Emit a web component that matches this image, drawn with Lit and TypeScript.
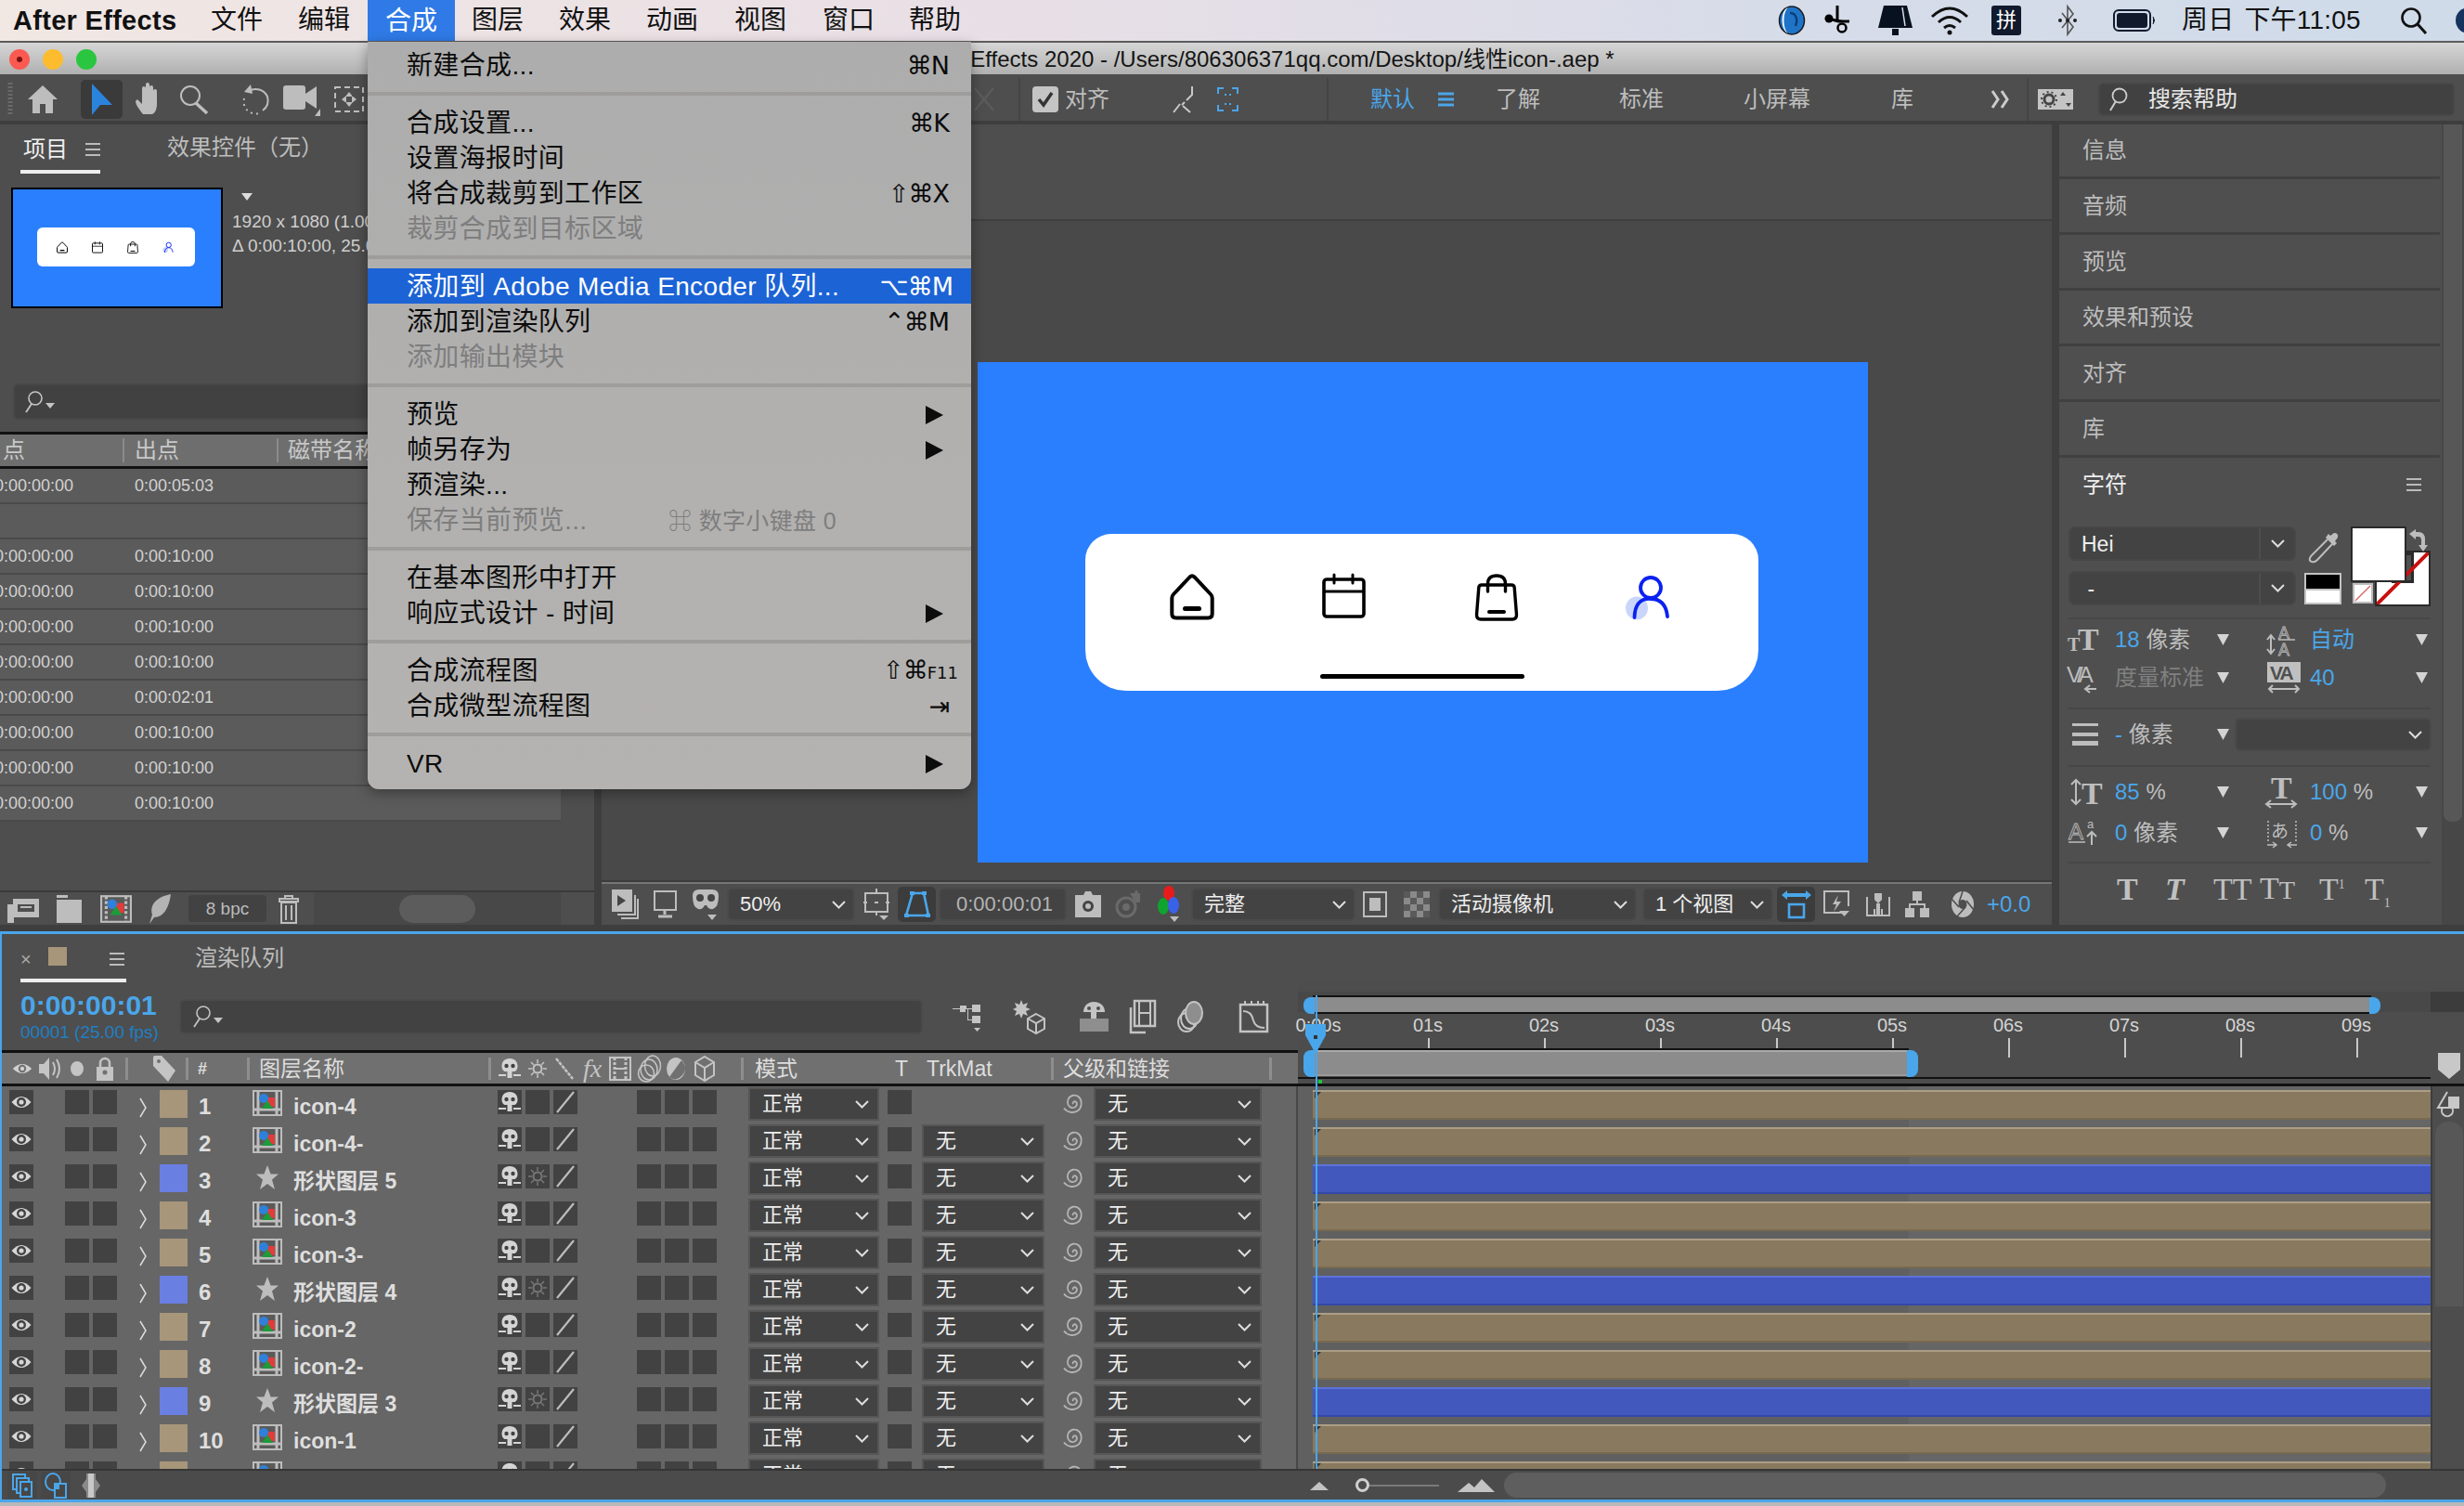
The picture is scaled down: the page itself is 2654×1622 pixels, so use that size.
import { LitElement, css, html, svg } from "lit";
import { customElement } from "lit/decorators.js";

type Slot = [number, number, unknown];

// lays out items along a row from their x positions, as flow with computed margins
const run = (items: Slot[], start = 0) => {
  let cur = start;
  return items.map(([x, w, c]) => {
    const m = x - cur;
    cur = x + w;
    return html`<div class="slot" style="margin-left:${m}px;width:${w}px">${c}</div>`;
  });
};

const BLUE = "#4aa6ea";

const chev = html`<svg width="15" height="9" viewBox="0 0 15 9"><path d="M1 1l6.5 6.5L14 1" fill="none" stroke="#ddd" stroke-width="2"/></svg>`;
const tri = html`<svg width="13" height="12" viewBox="0 0 13 12"><path d="M0 0h13L6.5 12z" fill="#d4d4d4"/></svg>`;
const burger = html`<svg width="16" height="14" viewBox="0 0 16 14"><path d="M0 1h16M0 7h16M0 13h16" stroke="#bbb" stroke-width="2"/></svg>`;
const lens = html`<svg width="34" height="26" viewBox="0 0 34 26"><circle cx="12" cy="9" r="7" fill="none" stroke="#c4c4c4" stroke-width="1.6"/><path d="M8 15L2 24" stroke="#c4c4c4" stroke-width="1.8"/><path d="M23 14h10l-5 6z" fill="#c4c4c4"/></svg>`;

const eye = html`<svg width="26" height="26" viewBox="0 0 26 26"><rect width="26" height="26" fill="#424242"/><path d="M2.5 13Q13 1 23.5 13Q13 25 2.5 13Z" fill="#d6d6d6"/><circle cx="13" cy="13" r="5" fill="#424242"/><circle cx="13" cy="13" r="2.6" fill="#d6d6d6"/></svg>`;
const dark = html`<div class="cell"></div>`;
const shyPath = html`<svg width="24" height="26" viewBox="0 0 24 26"><path d="M12 2C6 2 3.500 6 3.500 10.500c0 2.500 1 4.500 3 5.500h3v7h5v-7h3c2-1 3-3 3-5.500C20.500 6 18 2 12 2z" fill="#d4d4d4"/><circle cx="8.500" cy="10" r="2.200" fill="#424242"/><circle cx="15.500" cy="10" r="2.200" fill="#424242"/><path d="M0 20h8M16 20h8" stroke="#d4d4d4" stroke-width="2"/></svg>`;
const shy = html`<div class="cell">${shyPath}</div>`;
const sunSvg = (c: string) => html`<svg width="20" height="22" viewBox="0 0 20 22"><circle cx="10" cy="11" r="4.500" fill="none" stroke="${c}" stroke-width="2"/><path d="M10 1v4M10 17v4M0 11h4M16 11h4M3 4l3 3M14 15l3 3M3 18l3-3M14 7l3-3" stroke="${c}" stroke-width="1.500"/></svg>`;
const slash = html`<div class="cell"><svg width="26" height="26" viewBox="0 0 26 26"><path d="M4 24L22 2" stroke="#bdbdbd" stroke-width="2.200"/></svg></div>`;
const precomp = html`<svg width="32" height="28" viewBox="0 0 32 28"><rect x="1" y="1" width="30" height="26" fill="#5a5a5a" stroke="#bdbdbd" stroke-width="2"/><path d="M6 1v26M26 1v26M1 21h30" stroke="#bdbdbd" stroke-width="3"/><rect x="14" y="8" width="10" height="10" fill="#e23b3b"/><circle cx="12" cy="9" r="5" fill="#2f80db"/><path d="M16 11l6 9H10z" fill="#1d9b3a"/></svg>`;
const precompBig = html`<svg width="34" height="30" viewBox="0 0 32 28"><rect x="1" y="1" width="30" height="26" fill="#5a5a5a" stroke="#bdbdbd" stroke-width="2"/><path d="M6 1v26M26 1v26" stroke="#bdbdbd" stroke-width="3" stroke-dasharray="3 2"/><rect x="14" y="8" width="10" height="10" fill="#e23b3b"/><circle cx="12" cy="9" r="5" fill="#2f80db"/><path d="M16 11l6 9H10z" fill="#1d9b3a"/></svg>`;
const star = html`<svg width="26" height="28" viewBox="0 0 26 28"><path d="M13 1l3.600 9.500H25l-7 6 3 10.500-8-6-8 6 3-10.500-7-6h8.400z" fill="#bdbdbd"/></svg>`;
const spiral = html`<svg width="24" height="28" viewBox="0 0 24 28"><path d="M13 15c-1.500-2 2-4 3.500-1.500 1.500 3-1.500 6-5 5.500-4-.7-5.500-5-4-9 2-4.500 8-6 11.500-2.500 4 4 3.500 12-1.500 15-4 2.500-11 2-14.500-3" fill="none" stroke="#b4b4b4" stroke-width="1.800"/></svg>`;

const home = html`<svg width="48" height="50" viewBox="0 0 48 50"><path d="M21.500 3.500L4 22q-1.700 1.800-1.700 4v17q0 4.500 4.500 4.500h34.400q4.500 0 4.500-4.500V26q0-2.200-1.700-4L26.500 3.500q-2.500-2.500-5 0z" fill="none" stroke="#000" stroke-width="4"/><path d="M16.500 37.500h15" stroke="#000" stroke-width="5" stroke-linecap="round"/></svg>`;
const calendar = html`<svg width="47" height="48" viewBox="0 0 47 48"><rect x="2" y="6" width="43" height="40" rx="3" fill="none" stroke="#000" stroke-width="3.600"/><path d="M2 19h43" stroke="#000" stroke-width="3"/><path d="M13 1v9M33 1v9" stroke="#000" stroke-width="3" stroke-linecap="round"/></svg>`;
const bag = html`<svg width="46" height="51" viewBox="0 0 46 51"><path d="M7 12h32q3 0 3.200 3l2.300 29q0 5-4.500 5H6q-4.500 0-4.500-5L3.800 15Q4 12 7 12z" fill="none" stroke="#000" stroke-width="3.400"/><path d="M13.500 19v-8q0-9 9.500-9t9.500 9v8" fill="none" stroke="#000" stroke-width="3.400" stroke-linecap="round"/><path d="M15 41h16" stroke="#000" stroke-width="4" stroke-linecap="round"/></svg>`;
const person = html`<svg width="50" height="48" viewBox="-8 0 50 48"><ellipse cx="5" cy="35" rx="12" ry="12.500" fill="#c9d5fb"/><ellipse cx="20" cy="13" rx="11" ry="11" fill="none" stroke="#0a22f0" stroke-width="3.800"/><path d="M2.500 45Q3 24 20 25q16 0 18 19" fill="none" stroke="#0a22f0" stroke-width="3.800" stroke-linecap="round"/></svg>`;

const menuItems: any[] = [
  { t: "新建合成...", k: "⌘N" },
  { sep: true },
  { t: "合成设置...", k: "⌘K" },
  { t: "设置海报时间" },
  { t: "将合成裁剪到工作区", k: "⇧⌘X" },
  { t: "裁剪合成到目标区域", dis: true },
  { sep: true },
  { t: "添加到 Adobe Media Encoder 队列...", k: "⌥⌘M", on: true },
  { t: "添加到渲染队列", k: "⌃⌘M" },
  { t: "添加输出模块", dis: true },
  { sep: true },
  { t: "预览", sub: true },
  { t: "帧另存为", sub: true },
  { t: "预渲染..." },
  { t: "保存当前预览...", dis: true, mid: "⌘ 数字小键盘 0" },
  { sep: true },
  { t: "在基本图形中打开" },
  { t: "响应式设计 - 时间", sub: true },
  { sep: true },
  { t: "合成流程图", k: "⇧⌘", fk: "F11" },
  { t: "合成微型流程图", k: "⇥" },
  { sep: true },
  { t: "VR", sub: true },
];

const layers = [
  ["icon-4", "p"], ["icon-4-", "p"], ["形状图层 5", "s"], ["icon-3", "p"], ["icon-3-", "p"], ["形状图层 4", "s"],
  ["icon-2", "p"], ["icon-2-", "p"], ["形状图层 3", "s"], ["icon-1", "p"], ["icon-1-", "p"],
];

const projectRows = ["0:00:05:03", "", "0:00:10:00", "0:00:10:00", "0:00:10:00", "0:00:10:00", "0:00:02:01", "0:00:10:00", "0:00:10:00", "0:00:10:00"];

const marks = ["01s", "02s", "03s", "04s", "05s", "06s", "07s", "08s", "09s"];

@customElement("app-root")
export class AppRoot extends LitElement {
  static styles = css`
    :host {
      display: block;
      position: relative;
      width: 2654px;
      height: 1622px;
      overflow: hidden;
      background: #b8b8b8;
      font-family: "Liberation Sans", "Noto Sans CJK SC", sans-serif;
      font-size: 24px;
      line-height: 30px;
      color: #bdbdbd;
    }
    svg { display: block; flex: none; overflow: visible; }
    .row { display: flex; align-items: center; }
    .slot { flex: none; display: flex; align-items: center; white-space: nowrap; }

    .menubar { height: 44px; background: linear-gradient(90deg, #f1e7e3 0, #e8dfe6 42%, #d7dce9 72%, #cfdbe9 100%); color: #111; font-size: 28px; line-height: 46px; overflow: hidden; }
    .mb-on { width: 94px; height: 44px; text-align: center; background: #2f7ae6; color: #fff; }
    .ae { font-weight: bold; font-size: 29px; letter-spacing: .3px; }
    .clock { word-spacing: 3px; letter-spacing: .2px; }
    .pin { width: 32px; height: 32px; border-radius: 3px; background: #101a2c; color: #fff; font-size: 22px; line-height: 32px; text-align: center; }

    .titlebar { height: 36px; box-sizing: border-box; border-top: 2px solid #5c5c5c; background: linear-gradient(#d6d6d6, #b0b0b0); color: #141414; font-size: 24px; line-height: 36px; white-space: nowrap; }
    .title-text { margin-left: 988px; }
    .lights { position: absolute; left: 10px; top: 53px; display: flex; gap: 14px; }
    .light { width: 22px; height: 22px; border-radius: 50%; }
    .light.r { background: #fb5a52; display: flex; align-items: center; justify-content: center; }
    .light.r::after { content: ""; width: 6px; height: 6px; border-radius: 50%; background: #7a1410; }
    .light.y { background: #fcbc2e; }
    .light.g { background: #2ac63f; }

    .toolbar { height: 50px; box-sizing: border-box; padding-top: 3px; background: #4e4e4e; }
    .sel { width: 45px; height: 42px; background: #3a3a3a; border-radius: 5px; display: flex; align-items: center; justify-content: center; }
    .vline { width: 2px; height: 46px; background: #444; }
    .blue { color: #4aa6ea; }
    .check { width: 28px; height: 28px; border-radius: 4px; background: #c4c4c4; display: flex; align-items: center; justify-content: center; }
    .help { width: 384px; height: 36px; box-sizing: border-box; background: #414141; border: 2px solid #474747; border-radius: 6px; display: flex; align-items: center; padding-left: 8px; gap: 22px; color: #e8e8e8; }

    .main { display: flex; height: 873px; box-sizing: border-box; padding: 4px 0 7px; background: #3e3e3e; }
    .project { width: 640px; background: #4e4e4e; display: flex; flex-direction: column; margin-right: 8px; font-size: 18px; }
    .tabs { height: 53px; align-items: flex-end; flex: none; font-size: 24px; }
    .tab { display: flex; align-items: center; justify-content: space-between; height: 48px; width: 100%; box-sizing: border-box; padding: 0 0 0 3px; border-bottom: 4px solid #eee; color: #eee; }
    .tab-text { height: 48px; box-sizing: border-box; padding-bottom: 8px; display: flex; align-items: center; }
    .info { height: 218px; flex: none; padding-top: 15px; box-sizing: border-box; display: flex; }
    .thumb { margin-left: 12px; width: 228px; height: 130px; box-sizing: border-box; border: 2px solid #000; background: #2a7fff; padding: 41px 0 0 26px; }
    .thumb-card { width: 170px; height: 42px; background: #fff; border-radius: 6px; display: flex; align-items: center; padding-left: 21px; gap: 26px; box-sizing: border-box; }
    .thumb-card svg { width: 12px; height: 13px; }
    .meta { margin-left: 10px; line-height: 26px; white-space: nowrap; color: #cfcfcf; font-size: 19px; }
    .meta svg { margin: 6px 0 10px 10px; }
    .search { flex: none; margin: 8px 0 13px 14px; width: 610px; height: 39px; box-sizing: border-box; background: #414141; border: 2px solid #474747; border-radius: 6px; padding-left: 10px; display: flex; align-items: center; }
    .thead { flex: none; height: 40px; width: 604px; box-sizing: border-box; border-top: 3px solid #111; border-bottom: 3px solid #111; background: #6e6e6e; font-size: 24px; color: #c8c8c8; overflow: hidden; }
    .vbar { width: 2px; height: 26px; background: #8a8a8a; }
    .trow { flex: none; height: 38px; width: 604px; box-sizing: border-box; border-bottom: 2px solid #4a4a4a; background: #5b5b5b; color: #d2d2d2; font-size: 18px; overflow: hidden; }
    .pfoot { margin-top: auto; height: 35px; flex: none; border-top: 2px solid #3a3a3a; background: #4e4e4e; }
    .bpc { width: 84px; height: 29px; background: #424242; border-radius: 4px; text-align: center; color: #bbb; font-size: 19px; line-height: 29px; }
    .ptrack { width: 266px; height: 35px; background: #484848; display: flex; justify-content: center; align-items: center; }
    .oval { width: 82px; height: 30px; background: #5c5c5c; border-radius: 15px; }

    .viewer { width: 1562px; margin-right: 8px; display: flex; flex-direction: column; background: #4e4e4e; }
    .vtop { height: 102px; flex: none; border-bottom: 2px solid #3e3e3e; }
    .stage { flex: 1; background: #494949; padding: 152px 0 0 405px; border-bottom: 2px solid #3c3c3c; }
    .comp { width: 959px; height: 539px; background: #2a7fff; padding: 185px 0 0 116px; box-sizing: border-box; }
    .card { width: 725px; height: 169px; background: #fff; border-radius: 28px 28px 44px 44px; box-sizing: border-box; padding-top: 43px; }
    .card-icons { display: flex; align-items: flex-start; padding-left: 91px; height: 108px; }
    .home-s { width: 164px; }
    .cal-s { width: 165px; }
    .bag-s { width: 161px; }
    .person-s { margin-top: 2px; }
    .underline { width: 220px; height: 5px; background: #000; border-radius: 3px; margin-left: 253px; }
    .vbarline { height: 2px; background: #757575; flex: none; }
    .vfoot { height: 44px; flex: none; background: #4e4e4e; color: #eee; font-size: 22px; }
    .dd { height: 36px; width: 100%; box-sizing: border-box; background: #434343; border: 2px solid #4a4a4a; border-radius: 6px; display: flex; align-items: center; justify-content: space-between; padding: 0 8px 0 12px; }
    .dd.end { justify-content: flex-end; }
    .dd-box { height: 38px; background: #3c3c3c; border-radius: 5px; display: flex; align-items: center; justify-content: center; width: 100%; }
    .time { color: #b4b4b4; justify-content: center; }

    .right { flex: 1; display: flex; }
    .rpanel { width: 412px; background: #4f4f4f; }
    .rscroll { width: 24px; background: #474747; }
    .thumbv { width: 20px; height: 751px; margin-left: 2px; background: #575757; border-radius: 0 0 8px 8px; }
    .rrow { height: 57px; display: flex; align-items: center; padding-left: 25px; border-bottom: 3px solid #404040; margin-right: 2px; }
    .rrow:first-child { height: 56px; }
    .rhead { height: 58px; color: #eee; }
    .swatches { height: 86px; margin-top: 16px; align-items: flex-start; }
    .fonts { width: 245px; display: flex; flex-direction: column; gap: 11px; margin-left: 10px; }
    .fd { height: 37px; box-sizing: border-box; background: #434343; border: 2px solid #474747; border-radius: 7px; display: flex; align-items: center; color: #eee; font-size: 23px; padding-left: 12px; }
    .fd span { flex: 1; }
    .fd i { width: 36px; height: 100%; border-left: 2px solid #4d4d4d; display: flex; align-items: center; justify-content: center; }
    .dropper { margin: 6px 0 0 12px; }
    .bw { width: 40px; height: 34px; margin: 50px 0 0 -38px; border: 2px solid #c4c4c4; background: linear-gradient(#000 50%, #c4c4c4 50%, #c4c4c4 58%, #fff 58%); box-sizing: border-box; }
    .colors { position: relative; width: 86px; height: 86px; margin-left: 10px; }
    .fill { position: absolute; left: 0; top: 0; width: 60px; height: 60px; box-sizing: border-box; background: #fff; border: 2px solid #2a2a2a; }
    .stroke { position: absolute; left: 26px; top: 26px; width: 60px; height: 60px; box-sizing: border-box; border: 2px solid #2a2a2a; background: #fff; overflow: hidden; }
    .stroke::before { content: ""; position: absolute; left: 16px; top: 0; width: 24px; height: 33px; background: #4f4f4f; border: 3px solid #2a2a2a; box-sizing: border-box; }
    .stroke svg { position: absolute; left: -2px; top: -2px; }
    .none { position: absolute; left: 2px; top: 61px; }
    .swap { position: absolute; left: 62px; top: 2px; }
    .line-div { height: 2px; background: #474747; margin: 0 0 0 10px; width: 390px; }
    .line-div.first { margin-top: 12px; }
    .cv { color: #4aa6ea; font-size: 24px; }
    .cw { color: #bdbdbd; }
    .cd { color: #808080; }
    .h42 { height: 42px; } .h40 { height: 40px; } .h54 { height: 54px; } .h56 { height: 56px; }
    .h48 { height: 48px; box-sizing: border-box; padding-top: 6px; }
    .pt3 { box-sizing: border-box; padding-top: 3px; }
    .mt1 { margin-top: 1px; } .mb13 { margin-bottom: 12px; } .mb6 { margin-bottom: 6px; }
    .tfont { font-family: "Liberation Serif", serif; font-size: 34px; color: #c0c0c0; font-weight: bold; line-height: 40px; }
    .tfont.thin { font-weight: normal; }
    .tfont sup, .tfont sub { font-size: 14px; line-height: 0; }

    .timeline { height: 615px; box-sizing: border-box; border-top: 3px solid #4aa6ea; border-left: 2px solid #4aa6ea; border-bottom: 3px solid #4aa6ea; background: #4e4e4e; position: relative; display: flex; flex-direction: column; }
    .ttabs { height: 52px; flex: none; font-size: 24px; }
    .ttab { width: 114px; height: 46px; margin: 6px 0 0 20px; box-sizing: border-box; border-bottom: 4px solid #eee; display: flex; align-items: center; color: #aaa; }
    .ttab b { flex: none; width: 20px; height: 20px; background: #a8967a; margin: 0 46px 6px 20px; }
    .ttab u { flex: none; text-decoration: none; font-size: 20px; width: 10px; }
    .qname { margin-left: 74px; }
    .ttop { display: flex; height: 112px; flex: none; }
    .tleft { width: 1396px; flex: none; display: flex; flex-direction: column; }
    .tools { height: 73px; flex: none; }
    .tc { line-height: 32px; }
    .tc b { display: block; color: #4aa6ea; font-size: 30px; font-weight: bold; line-height: 34px; }
    .tc span { display: block; color: #1f7fc4; font-size: 19px; line-height: 24px; }
    .tsearch { width: 801px; height: 38px; box-sizing: border-box; background: #424242; border: 2px solid #4a4a4a; border-radius: 6px; padding-left: 12px; display: flex; align-items: center; }
    .lhead { height: 39px; flex: none; box-sizing: border-box; border-top: 3px solid #111; border-bottom: 3px solid #111; background: #707070; color: #ddd; font-size: 23px; }
    .lsep { width: 3px; height: 24px; background: #8e8e8e; }
    .hash { font-size: 18px; font-weight: bold; }
    .fx { font-family: "Liberation Serif", serif; font-size: 28px; color: #c4c4c4; }
    .scale { flex: 1; position: relative; background: #4d4d4d; }
    .nav { position: absolute; left: 16px; top: 14px; width: 1136px; height: 16px; border: 2px solid #111; background: #8c8c8c; }
    .navbg { position: absolute; left: 0; right: 0; top: 10px; height: 22px; background: #484848; }
    .navend { position: absolute; right: 0; top: 0; bottom: 0; width: 36px; background: #3c3c3c; }
    .hnd { position: absolute; width: 12px; background: #4aa6ea; }
    .hl { border-radius: 8px 0 0 8px; left: 6px; }
    .hr { border-radius: 0 8px 8px 0; }
    .h-nav { top: 16px; height: 18px; }
    .h-work { top: 73px; height: 29px; }
    .nav-r { left: 1154px; }
    .work-r { left: 656px; }
    .tick-label { position: absolute; top: 32px; width: 50px; margin-left: -25px; text-align: center; font-size: 20px; line-height: 28px; color: #d4d4d4; }
    .zero { left: 22px; }
    .tick { position: absolute; top: 60px; width: 2px; background: #c8c8c8; }
    .work { position: absolute; left: 18px; top: 71px; width: 640px; height: 30px; box-sizing: border-box; border-top: 2px solid #111; background: linear-gradient(#aaa 2px, #8c8c8c 2px, #8c8c8c 26px, #9a9a9a 26px); }
    .black { position: absolute; left: 0; right: 36px; top: 102px; height: 2px; background: #111; }
    .green { position: absolute; left: 22px; top: 105px; width: 4px; height: 5px; background: #21c43a; }
    .sbase { position: absolute; left: 0; right: 0; bottom: 0; height: 3px; background: #111; }
    .pin-side { position: absolute; right: 4px; top: 76px; }
    .head { position: absolute; left: 1404px; top: 97px; z-index: 2; }
    .pline { position: absolute; left: 1415px; top: 66px; bottom: 33px; width: 2px; background: #4aa6ea; z-index: 2; }

    .body { height: 412px; flex: none; overflow: hidden; display: flex; }
    .rows { width: 2616px; flex: none; }
    .lrow { height: 40px; display: flex; background: #666; color: #dedede; font-size: 23px; }
    .lcells { width: 1396px; flex: none; display: flex; align-items: flex-start; padding-top: 4px; box-sizing: border-box; border-right: 2px solid #484848; }
    .cell { width: 26px; height: 26px; background: #424242; display: flex; align-items: center; justify-content: center; }
    .sw { width: 30px; height: 30px; }
    .sw.p { background: #a8967a; }
    .sw.s { background: #6a7fe2; }
    .num { font-weight: bold; font-size: 24px; line-height: 36px; }
    .nm { font-weight: bold; line-height: 36px; }
    .staricon { margin-left: 3px; }
    .arrow-r { margin-top: 8px; }
    .ldd { width: 100%; height: 36px; margin-top: -3px; box-sizing: border-box; background: #434343; border: 2px solid #565656; display: flex; align-items: center; justify-content: space-between; padding: 0 9px 0 13px; color: #eee; font-size: 22px; font-weight: normal; }
    .track { flex: 1; position: relative; padding: 4px 0 0 16px; background: linear-gradient(90deg, #606060 0, #606060 658px, #666 658px); }
    .bar { height: 32px; box-sizing: border-box; }
    .bar.p { background: #897a5f; border-top: 2px solid #ab9e86; border-bottom: 2px solid #786a50; position: relative; }
    .bar.p::before { content: ""; position: absolute; left: 2px; top: 0; border-style: solid; border-width: 7px 7px 0 0; border-color: #333 transparent transparent transparent; }
    .bar.s { background: #4258bd; border-top: 2px solid #5c72d8; border-bottom: 2px solid #3448a8; }
    .side { flex: 1; background: #4d4d4d; border-left: 2px solid #3c3c3c; }
    .sthumb { width: 30px; height: 199px; margin: 6px 0 0 3px; background: #575757; border-radius: 14px 14px 0 0; }
    .lock { margin: 6px 0 0 5px; }
    .tfoot { height: 33px; flex: none; box-sizing: border-box; border-top: 2px solid #363636; background: #4b4b4b; }
    .tbox { width: 32px; height: 29px; background: #474747; display: flex; align-items: center; justify-content: center; }
    .sl { position: relative; width: 90px; height: 2px; background: #7a7a7a; }
    .sl::before { content: ""; position: absolute; left: 0; top: -7px; width: 15px; height: 15px; border: 3px solid #cfcfcf; border-radius: 50%; box-sizing: border-box; background: #4b4b4b; }
    .hscroll { width: 950px; height: 27px; background: #5e5e5e; border-radius: 14px; }

    .menu { position: absolute; left: 396px; top: 45px; width: 650px; height: 805px; box-sizing: border-box; padding-top: 6px; background: linear-gradient(#adadad, #b5b3b1); border-radius: 0 0 12px 12px; box-shadow: 0 4px 14px rgba(0,0,0,.35); color: #0c0c0c; font-size: 28px; letter-spacing: .35px; z-index: 5; }
    .mi { height: 38px; box-sizing: border-box; line-height: 38px; display: flex; align-items: center; padding: 2px 24px 0 42px; white-space: nowrap; position: relative; }
    .mi .k { margin-left: auto; font-family: "DejaVu Sans", "Liberation Sans", sans-serif; font-size: 27px; letter-spacing: -1px; }
    .mi .k small { font-size: 18px; letter-spacing: 0; margin-right: -10px; }
    .mi.dis { color: #7e7e7e; }
    .mi.on { background: #1c63d5; color: #fff; padding-right: 20px; }
    .mi .mid { position: absolute; left: 324px; font-size: 25px; }
    .mi .arr { margin-left: auto; margin-right: 6px; }
    .msep { height: 24px; display: flex; align-items: center; }
    .msep::after { content: ""; width: 100%; height: 4px; background: #9e9d9c; }
  `;

  renderMenuBar() {
    const items = ["文件", "编辑", "合成", "图层", "效果", "动画", "视图", "窗口", "帮助"];
    const xs = [227, 321, 396, 508, 602, 696, 791, 886, 979];
    return html`<div class="menubar row">
      ${run([
        [14, 190, html`<span class="ae">After Effects</span>`],
        ...items.map((t, i): Slot => (i === 2 ? [xs[i], 94, html`<div class="mb-on">${t}</div>`] : [xs[i], 60, t])),
        [1915, 30, html`<svg width="30" height="32" viewBox="0 0 30 32"><ellipse cx="15" cy="16" rx="13.500" ry="15" fill="#1f74c8" stroke="#1a1a1a" stroke-width="1.500"/><path d="M11 2C5 7 5 25 11 30 3 27 2 5 11 2z" fill="#fff"/><path d="M13 8c6 0 9 6 6 14" fill="none" stroke="#0b3f78" stroke-width="2.500"/></svg>`],
        [1965, 30, html`<svg width="30" height="32" viewBox="0 0 30 32"><path d="M14 0v16" stroke="#000" stroke-width="3"/><path d="M1 13l14 4 12 0" stroke="#000" stroke-width="3"/><circle cx="5" cy="14" r="4.500" fill="#000"/><circle cx="19" cy="24" r="4.500" fill="none" stroke="#000" stroke-width="2.500"/></svg>`],
        [2023, 37, html`<svg width="37" height="32" viewBox="0 0 37 32"><path d="M6 0h25l6 24H0z" fill="#08111f"/><path d="M26 2l3 20" stroke="#d9deea" stroke-width="1.500"/><rect x="15" y="25" width="7" height="7" fill="#08111f"/></svg>`],
        [2078, 44, html`<svg width="44" height="32" viewBox="0 0 44 32"><g fill="none" stroke="#111" stroke-width="3"><path d="M3 12Q22-6 41 12"/><path d="M10 18Q22 7 34 18"/><path d="M16 24q6-5 12 0"/></g><circle cx="22" cy="29" r="2.500" fill="#111"/></svg>`],
        [2145, 32, html`<div class="pin">拼</div>`],
        [2214, 26, html`<svg width="26" height="34" viewBox="0 0 26 34"><path d="M7 9l12 15-6 8V2l6 8L7 25" fill="none" stroke="#555" stroke-width="1.600"/><circle cx="5" cy="17" r="2" fill="#222"/><circle cx="13" cy="17" r="2" fill="#222"/><circle cx="21" cy="17" r="2" fill="#222"/></svg>`],
        [2276, 46, html`<svg width="46" height="24" viewBox="0 0 46 24"><rect x="1" y="1" width="39" height="22" rx="5" fill="none" stroke="#101a2c" stroke-width="2"/><rect x="4" y="4" width="33" height="16" rx="3" fill="#101a2c"/><path d="M43 8q3 4 0 8" fill="#101a2c" stroke="#101a2c"/></svg>`],
        [2350, 193, html`<span class="clock">周日 下午11:05</span>`],
        [2585, 30, html`<svg width="30" height="30" viewBox="0 0 30 30"><circle cx="12" cy="12" r="9.500" fill="none" stroke="#111" stroke-width="2.600"/><path d="M19 19l9 10" stroke="#111" stroke-width="3"/></svg>`],
        [2644, 30, html`<svg width="30" height="30" viewBox="0 0 30 30"><circle cx="15" cy="15" r="14" fill="#16335e"/></svg>`],
      ])}
    </div>`;
  }

  renderToolbar() {
    const c = "#bdbdbd";
    return html`<div class="toolbar row">
      ${run([
        [8, 6, html`<svg width="6" height="36" viewBox="0 0 6 36"><path d="M3 0v36" stroke="#6a6a6a" stroke-width="5" stroke-dasharray="2 2"/></svg>`],
        [30, 32, html`<svg width="32" height="30" viewBox="0 0 32 30"><path d="M16 0L0 15h5v15h8V20h6v10h8V15h5z" fill="${c}"/></svg>`],
        [87, 45, html`<div class="sel"><svg width="26" height="34" viewBox="0 0 26 34"><path d="M2 0l22 23H11L2 34z" fill="#2b84dc"/></svg></div>`],
        [145, 30, html`<svg width="30" height="34" viewBox="0 0 30 34"><path d="M9 33c-3-4-8-10-8-14l2-2 5 5V5a2 2 0 014 0V1a2 2 0 014 0v3a2 2 0 014 0v4a2 2 0 014 0v14c0 5-2 11-6 11z" fill="${c}"/></svg>`],
        [193, 33, html`<svg width="33" height="32" viewBox="0 0 33 32"><circle cx="12" cy="12" r="10" fill="none" stroke="${c}" stroke-width="2"/><path d="M18 20l12 11" stroke="${c}" stroke-width="3.500"/></svg>`],
        [260, 30, html`<svg width="30" height="34" viewBox="0 0 30 34"><path d="M8 8A14 14 0 0128 14c2 7-1 12-5 15" fill="none" stroke="${c}" stroke-width="2"/><path d="M10 1L3 9l9 2z" fill="${c}"/><path d="M3 16a13 13 0 0016 16" fill="none" stroke="${c}" stroke-width="2" stroke-dasharray="2 4"/></svg>`],
        [305, 40, html`<svg width="40" height="36" viewBox="0 0 40 36"><rect y="3" width="24" height="26" rx="3" fill="${c}"/><path d="M24 12l12-8v24l-12-8z" fill="${c}"/><path d="M40 28v8h-6z" fill="${c}"/></svg>`],
        [360, 32, html`<svg width="32" height="28" viewBox="0 0 32 28"><rect x="1" y="1" width="30" height="26" fill="none" stroke="${c}" stroke-width="2" stroke-dasharray="6 4"/><path d="M16 6l4 5h-8zM16 22l4-5h-8zM8 14l5-4v8zM24 14l-5-4v8z" fill="${c}"/></svg>`],
        [1048, 24, html`<svg width="24" height="28" viewBox="0 0 24 28"><path d="M2 2l20 24M22 2L2 26" stroke="#5c5c5c" stroke-width="2"/></svg>`],
        [1097, 2, html`<div class="vline"></div>`],
        [1112, 28, html`<div class="check"><svg width="18" height="18" viewBox="0 0 18 18"><path d="M2 9l5 6 9-13" fill="none" stroke="#333" stroke-width="3.500"/></svg></div>`],
        [1147, 50, "对齐"],
        [1262, 28, html`<svg width="28" height="28" viewBox="0 0 28 28"><path d="M22 0v9l-6 6M14 17l-3 3M9 19l-7 9M12 21l8 7" stroke="#c8c8c8" stroke-width="2" fill="none"/></svg>`],
        [1311, 23, html`<svg width="23" height="26" viewBox="0 0 23 26"><path d="M1 7V1h6M16 1h6v6M22 19v6h-6M7 25H1v-6M8 8h2M13 8h2M8 18h2M13 18h2" fill="none" stroke="${BLUE}" stroke-width="2"/></svg>`],
        [1429, 2, html`<div class="vline"></div>`],
        [1476, 50, html`<span class="blue">默认</span>`],
        [1549, 17, html`<svg width="17" height="16" viewBox="0 0 17 16"><path d="M0 2h17M0 8h17M0 14h17" stroke="${BLUE}" stroke-width="3"/></svg>`],
        [1611, 50, "了解"],
        [1744, 50, "标准"],
        [1878, 74, "小屏幕"],
        [2037, 25, "库"],
        [2144, 22, html`<svg width="22" height="20" viewBox="0 0 22 20"><path d="M2 1l6 9-6 9M12 1l6 9-6 9" fill="none" stroke="#ccc" stroke-width="3"/></svg>`],
        [2183, 2, html`<div class="vline"></div>`],
        [2195, 38, html`<svg width="38" height="22" viewBox="0 0 38 22"><rect width="38" height="22" fill="#c4c4c4"/><circle cx="12" cy="11" r="5" fill="none" stroke="#444" stroke-width="3"/><circle cx="12" cy="11" r="8" fill="none" stroke="#444" stroke-width="2" stroke-dasharray="2 3"/><path d="M24 7h6l-3-4zM30 15h6l-3 4z" fill="#444"/></svg>`],
        [2260, 384, html`<div class="help"><svg width="22" height="26" viewBox="0 0 22 26"><circle cx="13" cy="9" r="7.500" fill="none" stroke="#ccc" stroke-width="1.800"/><path d="M9 15L3 25" stroke="#ccc" stroke-width="2"/></svg><span>搜索帮助</span></div>`],
      ])}
    </div>`;
  }

  renderProject() {
    return html`<div class="project">
      <div class="row tabs">
        ${run([
          [22, 86, html`<div class="tab"><span>项目</span>${burger}</div>`],
          [180, 200, html`<div class="tab-text">效果控件（无）</div>`],
        ])}
      </div>
      <div class="info">
        <div class="thumb">
          <div class="thumb-card">${home}${calendar}${bag}${person}</div>
        </div>
        <div class="meta">
          <svg width="12" height="8" viewBox="0 0 12 8"><path d="M0 0h12L6 8z" fill="#ddd"/></svg>
          <div>1920 x 1080 (1.00)</div>
          <div>Δ 0:00:10:00, 25.00 fps</div>
        </div>
      </div>
      <div class="search">${lens}</div>
      <div class="thead row">
        ${run([
          [3, 24, "点"],
          [132, 2, html`<div class="vbar"></div>`],
          [145, 50, "出点"],
          [298, 2, html`<div class="vbar"></div>`],
          [310, 100, "磁带名称"],
        ])}
      </div>
      ${projectRows.map(
        (r) => html`<div class="trow row">
          ${r ? run([[-6, 90, "0:00:00:00"], [145, 100, r]]) : ""}
        </div>`
      )}
      <div class="pfoot row">
        ${run([
          [8, 34, html`<svg width="34" height="30" viewBox="0 0 34 30"><path d="M0 10h7v20H0zM6 4h28v20H6z" fill="#bdbdbd"/><path d="M11 10h18v8H11z" fill="#4e4e4e"/><path d="M14 13h12" stroke="#bdbdbd" stroke-width="2"/></svg>`],
          [61, 27, html`<svg width="27" height="30" viewBox="0 0 27 30"><path d="M0 0h12v3H0zM0 5h27v25H0z" fill="#bdbdbd"/></svg>`],
          [108, 34, precompBig],
          [160, 26, html`<svg width="26" height="32" viewBox="0 0 26 32"><path d="M24 0C8 3 1 12 4 22l-3 10 5-7c10 0 16-10 18-25z" fill="#b4b4b4"/></svg>`],
          [203, 84, html`<div class="bpc">8 bpc</div>`],
          [300, 22, html`<svg width="22" height="30" viewBox="0 0 22 30"><path d="M7 1h8v3H7zM1 4h20v3H1zM3 8h16v22H3z" fill="none" stroke="#bdbdbd" stroke-width="2"/><path d="M8 11v16M14 11v16" stroke="#bdbdbd" stroke-width="2"/></svg>`],
          [338, 266, html`<div class="ptrack"><div class="oval"></div></div>`],
        ])}
      </div>
    </div>`;
  }

  renderViewer() {
    const c = "#bdbdbd";
    const dd = (t: string) => html`<div class="dd"><span>${t}</span>${chev}</div>`;
    return html`<div class="viewer">
      <div class="vtop"></div>
      <div class="stage">
        <div class="comp">
          <div class="card">
            <div class="card-icons">
              <div class="home-s">${home}</div>
              <div class="cal-s">${calendar}</div>
              <div class="bag-s">${bag}</div>
              <div class="person-s">${person}</div>
            </div>
            <div class="underline"></div>
          </div>
        </div>
      </div>
      <div class="vbarline"></div>
      <div class="vfoot row">
        ${run(
          [
            [659, 28, html`<svg width="28" height="32" viewBox="0 0 28 32"><rect y="0" width="22" height="24" fill="${c}"/><path d="M6 6l9 6-9 6z" fill="#444"/><path d="M25 6v21H6M28 10v21H10" fill="none" stroke="${c}" stroke-width="2"/></svg>`],
            [704, 25, html`<svg width="25" height="30" viewBox="0 0 25 30"><rect x="1" y="1" width="23" height="20" fill="none" stroke="${c}" stroke-width="2"/><path d="M12 21v5M5 28h15" stroke="${c}" stroke-width="3"/></svg>`],
            [745, 30, html`<svg width="30" height="34" viewBox="0 0 30 34"><path d="M1 8q0-7 7-7h14q7 0 7 7 0 12-6 14-5 1-7-4h-2q-2 5-7 4-6-2-6-14z" fill="${c}"/><circle cx="9" cy="10" r="4" fill="#444"/><circle cx="21" cy="10" r="4" fill="#444"/><path d="M17 28h10l-5 6z" fill="${c}"/></svg>`],
            [783, 138, dd("50%")],
            [930, 28, html`<svg width="28" height="34" viewBox="0 0 28 34"><rect x="2" y="5" width="24" height="20" fill="none" stroke="${c}" stroke-width="2"/><path d="M14 0v5M14 25v4M0 15h4M24 15h4M12 15h4" stroke="${c}" stroke-width="2"/><path d="M17 29h10l-5 5z" fill="${c}"/></svg>`],
            [967, 41, html`<div class="dd-box"><svg width="28" height="30" viewBox="0 0 28 30"><path d="M9 3h12l5 24H2z" fill="none" stroke="${BLUE}" stroke-width="2.600"/><path d="M6 1h5v4H6zM19 1h5v4h-5zM0 25h5v4H0zM23 25h5v4h-5z" fill="${BLUE}"/></svg></div>`],
            [1011, 138, html`<div class="dd time">0:00:00:01</div>`],
            [1158, 28, html`<svg width="28" height="28" viewBox="0 0 28 28"><path d="M0 4h9l2-4h6l2 4h9v24H0z" fill="${c}"/><circle cx="14" cy="16" r="6" fill="#444"/><circle cx="14" cy="16" r="3" fill="${c}"/></svg>`],
            [1201, 27, html`<svg width="27" height="30" viewBox="0 0 27 30"><circle cx="12" cy="18" r="10" fill="none" stroke="#6a6a6a" stroke-width="3"/><circle cx="12" cy="18" r="4" fill="#6a6a6a"/><path d="M16 3h5l1-3h2l1 3h2v10h-5" fill="#6a6a6a"/></svg>`],
            [1247, 23, html`<svg width="23" height="40" viewBox="0 0 23 40"><ellipse cx="12" cy="8" rx="6" ry="8" fill="#e81b1b"/><ellipse cx="6" cy="22" rx="6" ry="9" fill="#0fa32f"/><ellipse cx="17" cy="21" rx="6" ry="9" fill="#3a62e8"/><path d="M13 33h10l-5 6z" fill="${c}"/></svg>`],
            [1283, 177, dd("完整")],
            [1468, 26, html`<svg width="26" height="28" viewBox="0 0 26 28"><rect x="1" y="1" width="24" height="26" fill="none" stroke="${c}" stroke-width="2"/><rect x="7" y="7" width="12" height="14" fill="${c}"/></svg>`],
            [1512, 28, html`<svg width="28" height="28" viewBox="0 0 28 28"><rect width="28" height="28" fill="#8a8a8a"/><path d="M0 0h7v7H0zM14 0h7v7h-7zM7 7h7v7H7zM21 7h7v7h-7zM0 14h7v7H0zM14 14h7v7h-7zM7 21h7v7H7zM21 21h7v7h-7z" fill="#5a5a5a"/></svg>`],
            [1549, 214, dd("活动摄像机")],
            [1769, 141, dd("1 个视图")],
            [1914, 41, html`<div class="dd-box"><svg width="32" height="30" viewBox="0 0 32 30"><path d="M0 5l6-5v3h20V0l6 5-6 5V7H6v3z" fill="${BLUE}"/><rect x="8" y="15" width="16" height="14" fill="none" stroke="${BLUE}" stroke-width="2.600"/></svg></div>`],
            [1964, 28, html`<svg width="28" height="30" viewBox="0 0 28 30"><path d="M20 24H1V1h26v16" fill="none" stroke="${c}" stroke-width="2"/><path d="M16 5l-6 10h4l-3 8 8-11h-5z" fill="${c}"/><path d="M17 22h11l-5.500 6z" fill="${c}"/></svg>`],
            [2010, 26, html`<svg width="26" height="26" viewBox="0 0 26 26"><path d="M1 5v20h24V5M9 18v7M17 18v7" fill="none" stroke="${c}" stroke-width="2"/><path d="M9 1h8v7l-4 4-4-4zM11 12h4v13h-4z" fill="${c}"/></svg>`],
            [2052, 26, html`<svg width="26" height="28" viewBox="0 0 26 28"><path d="M8 0h10v10H8zM0 18h10v10H0zM16 18h10v10H16z" fill="${c}"/><path d="M13 10v4M5 18v-4h16v4" fill="none" stroke="${c}" stroke-width="2"/></svg>`],
            [2102, 24, html`<svg width="24" height="28" viewBox="0 0 24 28"><ellipse cx="12" cy="14" rx="12" ry="14" fill="${c}"/><path d="M8 12l4-12M16 10L24 20M15 17L6 27M8 17L0 8" stroke="#4e4e4e" stroke-width="1.600"/><ellipse cx="12" cy="14" rx="4.500" ry="5" fill="#4e4e4e"/></svg>`],
            [2140, 50, html`<span class="cv">+0.0</span>`],
          ],
          648
        )}
      </div>
    </div>`;
  }

  renderRight() {
    const names = ["信息", "音频", "预览", "效果和预设", "对齐", "库"];
    const arrow = tri;
    const I = (body: unknown, w = 38, h = 34) => html`<svg width="${w}" height="${h}" viewBox="0 0 ${w} ${h}" fill="#bdbdbd">${body}</svg>`;
    const s = 2218;
    return html`<div class="right">
      <div class="rpanel">
        ${names.map((n) => html`<div class="rrow">${n}</div>`)}
        <div class="row rhead">${run([[2243, 50, "字符"], [2592, 16, burger]], s)}</div>
        <div class="row swatches">
          <div class="fonts">
            <div class="fd"><span>Hei</span><i>${chev}</i></div>
            <div class="fd"><span>&nbsp;-</span><i>${chev}</i></div>
          </div>
          <div class="dropper"><svg width="35" height="34" viewBox="0 0 35 34"><path d="M22 8L4 26q-3 5 1 6 3 1 6-2l17-18" fill="none" stroke="#bdbdbd" stroke-width="2"/><path d="M20 6l9 9 3-3-2-2 3-4q1-5-4-5l-4 3-2-2z" fill="#bdbdbd"/></svg></div>
          <div class="bw"></div>
          <div class="colors">
            <div class="stroke"><svg width="60" height="60" viewBox="0 0 60 60"><path d="M0 60L60 0" stroke="#c8100f" stroke-width="4"/></svg></div>
            <div class="fill"></div>
            <div class="none"><svg width="22" height="22" viewBox="0 0 22 22"><rect x="1" y="1" width="20" height="20" fill="#fff" stroke="#bdbdbd" stroke-width="2"/><path d="M3 19L19 3" stroke="#d66" stroke-width="1.500"/></svg></div>
            <div class="swap"><svg width="22" height="26" viewBox="0 0 22 26"><path d="M1 6l7-5v3h3q7 0 7 8v6h3l-5 7-5-7h3v-5q0-4-3-4H8v3z" fill="#bdbdbd"/></svg></div>
          </div>
        </div>
        <div class="line-div first"></div>
        <div class="row h42 mt1">
          ${run(
            [
              [2228, 36, I(svg`<text x="10" y="28" font-family="Liberation Serif" font-weight="bold" font-size="34">T</text><text x="-1" y="29" font-family="Liberation Serif" font-weight="bold" font-size="20">T</text>`)],
              [2278, 110, html`<span class="cv">18 <span class="cw">像素</span></span>`],
              [2388, 13, arrow],
              [2440, 34, I(svg`<text x="14" y="16" font-size="18" fill="none" stroke="#bdbdbd" stroke-width=".8">A</text><text x="14" y="34" font-size="18" fill="none" stroke="#bdbdbd" stroke-width=".8">A</text><path d="M14 17h18" stroke="#bdbdbd" stroke-width="1.500"/><path d="M6 12v20M2 17l4-5 4 5M2 27l4 5 4-5" fill="none" stroke="#bdbdbd" stroke-width="2"/>`)],
              [2488, 110, html`<span class="cv">自动</span>`],
              [2602, 13, arrow],
            ],
            s
          )}
        </div>
        <div class="row h40 mb13">
          ${run(
            [
              [2226, 38, I(svg`<text x="0" y="22" font-size="24" letter-spacing="-5">V/A</text><path d="M20 29h12M25 25l-5 4 5 4" fill="none" stroke="#bdbdbd" stroke-width="2"/>`)],
              [2278, 110, html`<span class="cd">度量标准</span>`],
              [2388, 13, arrow],
              [2442, 36, I(svg`<rect width="36" height="22" fill="#c0c0c0"/><text x="3" y="19" font-size="21" font-weight="bold" fill="#4f4f4f" letter-spacing="-2">VA</text><path d="M2 29h32M6 25l-4 4 4 4M30 25l4 4-4 4" fill="none" stroke="#bdbdbd" stroke-width="2"/>`)],
              [2488, 110, html`<span class="cv">40</span>`],
              [2602, 13, arrow],
            ],
            s
          )}
        </div>
        <div class="line-div"></div>
        <div class="row h54 mb6">
          ${run(
            [
              [2232, 28, I(svg`<path d="M0 1h28v3H0zM0 11h28v4H0zM0 20h28v5H0z"/>`, 28, 26)],
              [2278, 110, html`<span class="cv">- <span class="cw">像素</span></span>`],
              [2388, 13, arrow],
              [2407, 212, html`<div class="dd end">${chev}</div>`],
            ],
            s
          )}
        </div>
        <div class="line-div"></div>
        <div class="row h48">
          ${run(
            [
              [2230, 36, I(svg`<text x="12" y="30" font-family="Liberation Serif" font-weight="bold" font-size="34">T</text><path d="M6 4v26M1 9l5-5 5 5M1 25l5 5 5-5" fill="none" stroke="#bdbdbd" stroke-width="2"/>`)],
              [2278, 110, html`<span class="cv">85 <span class="cw">%</span></span>`],
              [2388, 13, arrow],
              [2440, 34, I(svg`<text x="6" y="24" font-family="Liberation Serif" font-weight="bold" font-size="34">T</text><path d="M1 30h32M6 26l-5 4 5 4M28 26l5 4-5 4" fill="none" stroke="#bdbdbd" stroke-width="2"/>`)],
              [2488, 110, html`<span class="cv">100 <span class="cw">%</span></span>`],
              [2602, 13, arrow],
            ],
            s
          )}
        </div>
        <div class="row h42 pt3 mb13">
          ${run(
            [
              [2228, 32, I(svg`<text x="0" y="24" font-size="24" fill="none" stroke="#bdbdbd" stroke-width=".8">A</text><text x="20" y="12" font-size="13">a</text><path d="M0 27h18" stroke="#bdbdbd" stroke-width="1.500"/><path d="M25 16v14M20 21l5-5 5 5" fill="none" stroke="#bdbdbd" stroke-width="2"/>`, 32)],
              [2278, 110, html`<span class="cv">0 <span class="cw">像素</span></span>`],
              [2388, 13, arrow],
              [2442, 32, I(svg`<text x="4" y="22" font-size="19" font-family="Noto Sans CJK JP">あ</text><path d="M1 4v22M31 4v22" stroke="#bdbdbd" stroke-width="1.500" stroke-dasharray="2 2"/><path d="M0 30h10M6 27l4 3-4 3M32 30H22M26 27l-4 3 4 3" fill="none" stroke="#bdbdbd" stroke-width="1.500"/>`, 32)],
              [2488, 110, html`<span class="cv">0 <span class="cw">%</span></span>`],
              [2602, 13, arrow],
            ],
            s
          )}
        </div>
        <div class="line-div"></div>
        <div class="row h56">
          ${run(
            [
              [2280, 30, html`<span class="tfont">T</span>`],
              [2332, 26, html`<span class="tfont"><i>T</i></span>`],
              [2384, 40, html`<span class="tfont thin">TT</span>`],
              [2434, 40, html`<span class="tfont thin">T<small>T</small></span>`],
              [2498, 30, html`<span class="tfont thin">T<sup>1</sup></span>`],
              [2547, 30, html`<span class="tfont thin">T<sub>1</sub></span>`],
            ],
            s
          )}
        </div>
      </div>
      <div class="rscroll"><div class="thumbv"></div></div>
    </div>`;
  }

  renderTimeline() {
    const c = "#c4c4c4";
    const sep = html`<div class="lsep"></div>`;
    const O = 2;
    return html`<div class="timeline">
      <div class="ttabs row">
        <div class="ttab"><u>×</u><b></b>${burger}</div>
        <div class="qname">渲染队列</div>
      </div>
      <div class="ttop">
        <div class="tleft">
          <div class="tools row">
            ${run(
              [
                [22, 150, html`<div class="tc"><b>0:00:00:01</b><span>00001 (25.00 fps)</span></div>`],
                [193, 801, html`<div class="tsearch">${lens}</div>`],
                [1026, 30, html`<svg width="30" height="32" viewBox="0 0 30 32"><path d="M0 7h8V4h7v3h6V3h9v8h-9V8h-4v11h4v-4h9v8h-9v-3h-5V8h-2v3H8V8H0z" fill="${c}"/><path d="M23 28h7l-3.500 4z" fill="${c}"/></svg>`],
                [1092, 34, html`<svg width="34" height="36" viewBox="0 0 34 36"><path d="M24 15l9 5v11l-9 5-9-5V20z" fill="none" stroke="${c}" stroke-width="2"/><path d="M15 20l9 5 9-5M24 25v11" fill="none" stroke="${c}" stroke-width="2"/><path d="M8 0l2 5 5-2-2 5 5 2-5 2 2 5-5-2-2 5-2-5-5 2 2-5-4-2 4-2-2-5 5 2z" fill="${c}"/></svg>`],
                [1163, 31, html`<svg width="31" height="32" viewBox="0 0 31 32"><path d="M15 0C8 0 4 5 4 11h23C27 5 23 0 15 0z" fill="${c}"/><circle cx="10" cy="7" r="2" fill="#4e4e4e"/><circle cx="20" cy="7" r="2" fill="#4e4e4e"/><rect x="12" y="11" width="6" height="8" fill="${c}"/><rect y="18" width="31" height="14" fill="#8e8e8e"/></svg>`],
                [1216, 29, html`<svg width="29" height="36" viewBox="0 0 29 36"><rect x="6" y="1" width="22" height="27" fill="none" stroke="${c}" stroke-width="2.500"/><path d="M11 1v27M23 1v27M11 14h12" stroke="${c}" stroke-width="2"/><path d="M2 8v27h16" fill="none" stroke="${c}" stroke-width="2.500"/></svg>`],
                [1268, 28, html`<svg width="28" height="34" viewBox="0 0 28 34"><g fill="none" stroke="${c}" stroke-width="2"><ellipse cx="10" cy="23" rx="9" ry="10"/><ellipse cx="13" cy="19" rx="9" ry="11"/></g><ellipse cx="18" cy="13" rx="9" ry="12" fill="#8e8e8e" stroke="${c}" stroke-width="2"/></svg>`],
                [1335, 31, html`<svg width="31" height="34" viewBox="0 0 31 34"><rect x="1" y="4" width="29" height="29" fill="none" stroke="${c}" stroke-width="2.500"/><path d="M6 0v4M13 0v4M20 0v4M26 0v4" stroke="${c}" stroke-width="2"/><path d="M4 11q9 0 11 10 2 8 12 8" fill="none" stroke="${c}" stroke-width="2"/></svg>`],
              ],
              O
            )}
          </div>
          <div class="lhead row">
            ${run(
              [
                [13, 21, html`<svg width="22" height="22" viewBox="0 0 26 26"><path d="M1 13Q13 1 25 13Q13 25 1 13Z" fill="#d0d0d0"/><circle cx="13" cy="13" r="5" fill="#707070"/><circle cx="13" cy="13" r="2.600" fill="#d0d0d0"/></svg>`],
                [42, 23, html`<svg width="23" height="26" viewBox="0 0 23 26"><path d="M0 8h5l6-7v24l-6-7H0z" fill="${c}"/><path d="M15 6q4 7 0 14M19 3q6 10 0 20" fill="none" stroke="${c}" stroke-width="2"/></svg>`],
                [76, 14, html`<svg width="14" height="16" viewBox="0 0 14 16"><ellipse cx="7" cy="8" rx="7" ry="8" fill="${c}"/></svg>`],
                [104, 18, html`<svg width="18" height="26" viewBox="0 0 18 26"><path d="M4 11V7a5 5 0 0110 0v4" fill="none" stroke="${c}" stroke-width="2.500"/><rect y="11" width="18" height="15" fill="${c}"/><circle cx="9" cy="17" r="2.500" fill="#707070"/></svg>`],
                [135, 3, sep],
                [165, 24, html`<svg width="24" height="28" viewBox="0 0 24 28"><path d="M0 2q0-2 2-2h7l15 16-8 12L0 11z" fill="${c}"/><circle cx="6" cy="6" r="2" fill="#707070"/></svg>`],
                [200, 3, sep],
                [213, 12, html`<span class="hash">#</span>`],
                [266, 3, sep],
                [279, 100, "图层名称"],
                [526, 3, sep],
                [537, 24, shyPath],
                [569, 20, sunSvg(c)],
                [598, 20, html`<svg width="20" height="26" viewBox="0 0 20 26"><path d="M1 2l18 22" stroke="${c}" stroke-width="2.500" stroke-dasharray="4 1"/></svg>`],
                [628, 22, html`<i class="fx">fx</i>`],
                [656, 24, html`<svg width="24" height="26" viewBox="0 0 24 26"><rect x="1" y="1" width="22" height="24" fill="none" stroke="${c}" stroke-width="2"/><path d="M6 1v24M18 1v24" stroke="${c}" stroke-width="3" stroke-dasharray="3 2"/><path d="M6 13h12" stroke="${c}" stroke-width="2"/></svg>`],
                [687, 25, html`<svg width="25" height="30" viewBox="0 0 25 30"><g fill="none" stroke="${c}" stroke-width="1.500"><ellipse cx="9" cy="20" rx="8.500" ry="9"/><ellipse cx="12" cy="16" rx="9" ry="11"/><ellipse cx="16" cy="12" rx="8.500" ry="11"/></g></svg>`],
                [718, 20, html`<svg width="20" height="24" viewBox="0 0 20 24"><ellipse cx="10" cy="12" rx="10" ry="12" fill="${c}"/><path d="M16 3L3 21a10 12 0 0013-1q8-8 0-17z" fill="#707070"/></svg>`],
                [747, 24, html`<svg width="24" height="28" viewBox="0 0 24 28"><path d="M12 1l10 6v14l-10 6-10-6V7zM2 7l10 6 10-6M12 13v14" fill="none" stroke="${c}" stroke-width="2"/></svg>`],
                [798, 3, sep],
                [813, 50, "模式"],
                [964, 14, "T"],
                [998, 70, "TrkMat"],
                [1132, 3, sep],
                [1145, 120, "父级和链接"],
                [1367, 3, sep],
              ],
              O
            )}
          </div>
        </div>
        <div class="scale">
          <div class="navbg"><div class="navend"></div></div>
          <div class="nav"></div>
          <div class="hnd hl h-nav"></div>
          <div class="hnd hr h-nav nav-r"></div>
          <div class="tick-label zero">0:00s</div>
          ${marks.map((m, i) => {
            const x = 140 + i * 125;
            return html`<div class="tick-label" style="left:${x}px">${m}</div><div class="tick" style="left:${x}px;height:${i < 5 ? 12 : 21}px"></div>`;
          })}
          <div class="work"></div>
          <div class="hnd hl h-work"></div>
          <div class="hnd hr h-work work-r"></div>
          <div class="black"></div>
          <div class="green"></div>
          <div class="sbase"></div>
          <div class="pin-side"><svg width="24" height="28" viewBox="0 0 24 28"><path d="M0 0h24v18l-12 10L0 18z" fill="#c8c8c8"/></svg></div>
        </div>
      </div>
      <div class="body">
        <div class="rows">
          ${layers.map(([name, kind], i) => {
            const sun = kind === "s" ? html`<div class="cell">${sunSvg("#777")}</div>` : dark;
            return html`<div class="lrow">
              <div class="lcells">
                ${run(
                  [
                    [10, 26, eye],
                    [70, 26, dark],
                    [100, 26, dark],
                    [150, 8, html`<svg class="arrow-r" width="8" height="22" viewBox="0 0 8 22"><path d="M1 1l6 10-6 10" fill="none" stroke="#ddd" stroke-width="1.500"/></svg>`],
                    [172, 30, html`<div class="sw ${kind}"></div>`],
                    [214, 50, html`<span class="num">${i + 1}</span>`],
                    [272, 32, kind === "s" ? html`<div class="staricon">${star}</div>` : precomp],
                    [316, 200, html`<span class="nm">${name}</span>`],
                    [536, 26, shy],
                    [566, 26, sun],
                    [596, 26, slash],
                    [686, 26, dark],
                    [716, 26, dark],
                    [746, 26, dark],
                    [806, 141, html`<div class="ldd"><span>正常</span>${chev}</div>`],
                    [956, 26, dark],
                    [993, 132, i === 0 ? "" : html`<div class="ldd"><span>无</span>${chev}</div>`],
                    [1143, 24, spiral],
                    [1178, 181, html`<div class="ldd"><span>无</span>${chev}</div>`],
                  ],
                  O
                )}
              </div>
              <div class="track"><div class="bar ${kind}"></div></div>
            </div>`;
          })}
        </div>
        <div class="side">
          <div class="lock"><svg width="24" height="26" viewBox="0 0 24 26"><path d="M11 0L1 17h16M6 17a6 6 0 1010 0" fill="none" stroke="#c8c8c8" stroke-width="2"/><rect x="12" y="5" width="12" height="13" fill="#c8c8c8"/></svg></div>
          <div class="sthumb"></div>
        </div>
      </div>
      <div class="tfoot row">
        ${run(
          [
            [8, 32, html`<div class="tbox"><svg width="22" height="26" viewBox="0 0 22 26"><g fill="#474747" stroke="${BLUE}" stroke-width="2"><rect x="1" y="1" width="13" height="16"/><rect x="5" y="5" width="13" height="16"/><rect x="9" y="9" width="12" height="16"/></g><circle cx="15" cy="17" r="2" fill="${BLUE}"/></svg></div>`],
            [44, 32, html`<div class="tbox"><svg width="24" height="28" viewBox="0 0 24 28"><ellipse cx="9" cy="10" rx="8" ry="9" fill="none" stroke="${BLUE}" stroke-width="2"/><rect x="11" y="12" width="12" height="15" fill="#474747" stroke="${BLUE}" stroke-width="2"/><path d="M11 12h5v6h-5z" fill="${BLUE}"/></svg></div>`],
            [86, 24, html`<svg width="24" height="26" viewBox="0 0 24 26"><path d="M7 0h10v6l5 7-5 7v6H7v-6L2 13l5-7z" fill="#8a8a8a"/><path d="M12 0v26" stroke="#c8c8c8" stroke-width="6"/></svg>`],
            [1411, 20, html`<svg width="20" height="10" viewBox="0 0 20 10"><path d="M0 10L10 1l10 9z" fill="#c4c4c4"/></svg>`],
            [1460, 90, html`<div class="sl"></div>`],
            [1570, 40, html`<svg width="40" height="14" viewBox="0 0 40 14"><path d="M0 14L12 4l6 5 8-9 14 14z" fill="#c4c4c4"/></svg>`],
            [1620, 950, html`<div class="hscroll"></div>`],
          ],
          O
        )}
      </div>
      <div class="pline"></div>
      <div class="head"><svg width="22" height="32" viewBox="0 0 22 32"><path d="M0 0h22v12L11 32 0 12z" fill="${BLUE}"/><rect x="9" y="12" width="4" height="4" fill="#333"/></svg></div>
    </div>`;
  }

  renderMenu() {
    return html`<div class="menu">
      ${menuItems.map((m) => {
        if (m.sep) return html`<div class="msep"></div>`;
        const cls = `mi${m.dis ? " dis" : ""}${m.on ? " on" : ""}`;
        return html`<div class=${cls}>
          <span>${m.t}</span>
          ${m.mid ? html`<span class="mid">${m.mid}</span>` : ""}
          ${m.k ? html`<span class="k">${m.k}${m.fk ? html`<small>${m.fk}</small>` : ""}</span>` : ""}
          ${m.sub ? html`<svg class="arr" width="19" height="20" viewBox="0 0 19 20"><path d="M0 0l19 10L0 20z" fill="#0c0c0c"/></svg>` : ""}
        </div>`;
      })}
    </div>`;
  }

  render() {
    return html`
      ${this.renderMenuBar()}
      <div class="titlebar"><div class="title-text">After Effects 2020 - /Users/806306371qq.com/Desktop/线性icon-.aep *</div></div>
      <div class="lights"><div class="light r"></div><div class="light y"></div><div class="light g"></div></div>
      ${this.renderToolbar()}
      <div class="main">${this.renderProject()}${this.renderViewer()}${this.renderRight()}</div>
      ${this.renderTimeline()}
      ${this.renderMenu()}
    `;
  }
}
